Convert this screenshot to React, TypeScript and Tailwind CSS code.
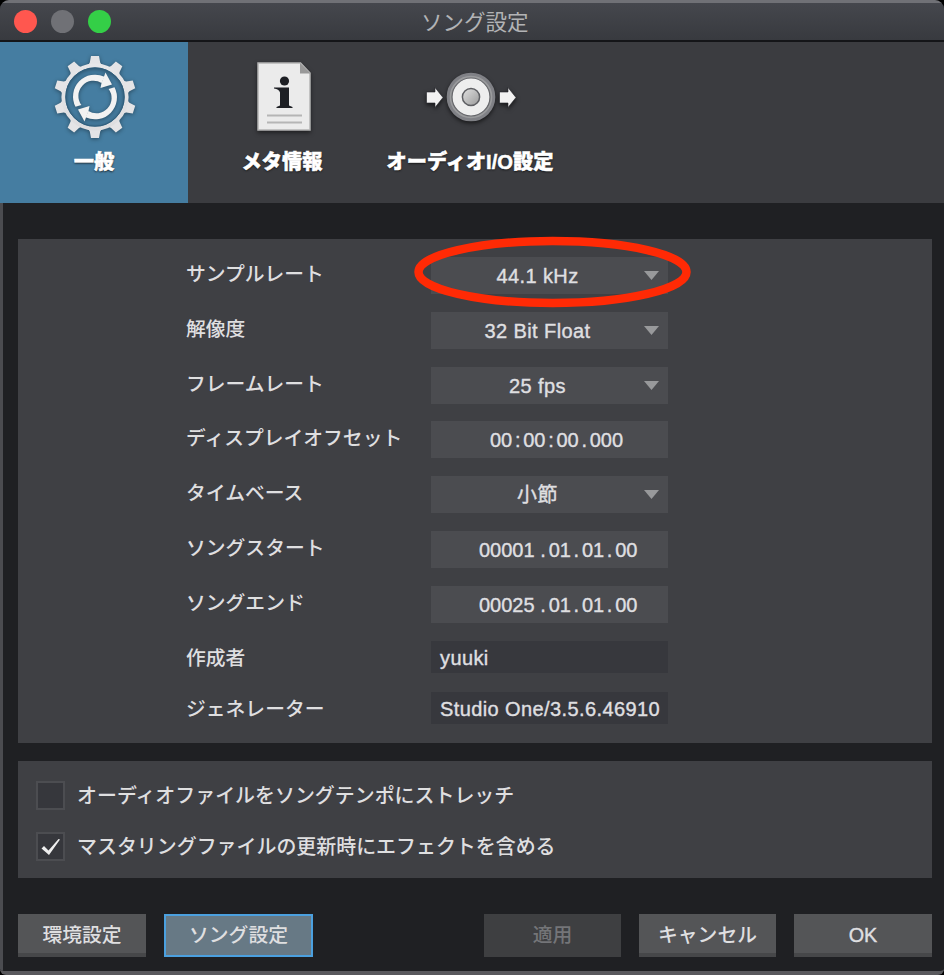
import type { ReactNode } from "react";
import clsx from "clsx";

const TEETH = [0, 36, 72, 108, 144, 180, 216, 252, 288, 324];

function GearIcon() {
  return (
    <svg width="88" height="88" viewBox="-44 -44 88 88" className="relative left-[0.5px] drop-shadow-[0_1px_2px_rgba(0,0,0,0.4)]">
      <defs>
        <linearGradient id="gear" x1="0" y1="-41" x2="0" y2="41" gradientUnits="userSpaceOnUse">
          <stop offset="0" stopColor="#e8e8ea" />
          <stop offset="1" stopColor="#dcdcde" />
        </linearGradient>
      </defs>
      {TEETH.map((angle) => (
        <path key={angle} d="M-7-31.5-5.2-34.5-4-41H4L5.2-34.5 7-31.5Z" fill="#e4e4e6" transform={`rotate(${angle})`} />
      ))}
      <circle r="31.6" fill="none" stroke="url(#gear)" strokeWidth="4" />
      <circle r="29.2" fill="none" stroke="#2f5f7e" strokeWidth="1" />
      {[0, 180].map((angle) => (
        <g key={angle} fill="#f2f2f2" transform={`rotate(${angle})`}>
          <path d="M-19.5 9.8-13.6 8A15.2 15.2 0 0 1 6.6-14L9.5-20.2A22 22 0 0 0-19.5 9.8Z" />
          <path d="M10.5-24.5 17-12.5 5.5-9 6.5-14 9-20.5Z" />
        </g>
      ))}
    </svg>
  );
}

function MetaIcon() {
  return (
    <svg width="60" height="76" viewBox="0 0 60 76" className="relative left-[2px] drop-shadow-[0_2px_2px_rgba(0,0,0,0.5)]">
      <path d="M4 4H46.5L56 14V71H4Z" fill="#ebebeb" stroke="#b5b5b5" strokeWidth="1.5" />
      <path d="M46 4V14.5H56.5Z" fill="#999" />
      <circle cx="30.5" cy="22" r="4.6" fill="#1d1f24" />
      <path d="M20 28.5H35V46.5L38.5 48V49H22.5V48L26 46.5V33.5Q25 30 20 29.5Z" fill="#1d1f24" />
      <path d="M13 56.5H48M13 63.5H48" stroke="#b5b5b5" strokeWidth="2" />
    </svg>
  );
}

function AudioIcon() {
  return (
    <svg width="100" height="60" viewBox="-50 -30 100 60" className="relative left-px drop-shadow-[0_2px_2px_rgba(0,0,0,0.6)]">
      <defs>
        <linearGradient id="knob" x1="0" y1="0" x2="1" y2="1">
          <stop offset="0" stopColor="#e2e2e2" />
          <stop offset="1" stopColor="#999" />
        </linearGradient>
      </defs>
      <circle r="22.8" fill="#9a9b9d" stroke="#808186" strokeWidth="3" />
      <circle r="19" fill="#eee" stroke="#66676b" strokeWidth="1.2" />
      <circle r="8.6" fill="url(#knob)" stroke="#5e5f63" strokeWidth="1.5" />
      <path d="M-44.5-5H-36V-9.5L-28 .5-36 10.5V6H-44.5Z" fill="#f2f2f2" stroke="#222428" strokeWidth="0.6" />
      <path d="M28.5-5H37V-9.5L45 .5 37 10.5V6H28.5Z" fill="#f2f2f2" stroke="#222428" strokeWidth="0.6" />
    </svg>
  );
}

function Tab({ label, icon, active, className }: { label: string; icon: ReactNode; active?: boolean; className: string }) {
  return (
    <button className={clsx("flex h-full flex-col items-center", active && "bg-[#457da1]", className)}>
      <span className="flex h-[109px] items-center justify-center">{icon}</span>
      <span className="text-[20.2px] leading-[22px] font-black whitespace-nowrap text-white [-webkit-text-stroke:0.5px_white] [text-shadow:0_1px_2px_#111]">
        {label}
      </span>
    </button>
  );
}

function Row({ label, children, className }: { label: string; children: ReactNode; className?: string }) {
  return (
    <div className={clsx("flex items-start pl-[168px]", className ?? "h-[54.8px]")}>
      <div className="w-[245px] pt-[3px] text-[19.8px] leading-7 font-medium">{label}</div>
      {children}
    </div>
  );
}

const LATIN = "tracking-[0.4px] [-webkit-text-stroke:0.4px_currentColor]";

function Select({ value }: { value: string }) {
  return (
    <button className="flex h-[37px] w-[237px] items-center bg-[#4b4c50] pr-[9px]">
      <span className={clsx("flex-1 pt-px text-center", LATIN)}>{value}</span>
      <svg width="15" height="9" viewBox="0 0 15 9">
        <path d="M0 0H15L7.5 9Z" fill="#98999b" />
      </svg>
    </button>
  );
}

// Separators are wider than the glyph, so every group keeps its column
function Counter({ value, className }: { value: string; className: string }) {
  return (
    <div className={clsx("flex h-[37px] w-[237px] items-center bg-[#4b4c50] pt-px [-webkit-text-stroke:0.4px_currentColor]", className)}>
      {value.split(/([.:])/).map((part, i) => (
        <span key={i} className={clsx(/[.:]/.test(part) && "w-[11px] text-center", i === 0 && part.length > 2 && "mr-[3px]")}>
          {part}
        </span>
      ))}
    </div>
  );
}

function TextField({ value }: { value: string }) {
  return <div className={clsx("h-8 w-[237px] bg-[#37383d] pl-[9px] leading-[34px] whitespace-nowrap", LATIN)}>{value}</div>;
}

function CheckRow({ label, checked }: { label: string; checked?: boolean }) {
  return (
    <label className="flex h-[29px] items-center">
      <span className="mr-3 flex size-[29px] items-center justify-center border-2 border-[#4c4d51] bg-[#36373c]">
        {checked && (
          <svg width="22" height="22" viewBox="0 0 22 22">
            <path d="M1.5 12.5 4 10 8.5 14.5 18.5 3 20 3.5 9 19Z" fill="#eee" />
          </svg>
        )}
      </span>
      <span className="pt-[2px] font-medium">{label}</span>
    </label>
  );
}

function Button({ label, className }: { label: string; className: string }) {
  return (
    <button className={clsx("flex h-[43px] items-center justify-center text-[19.8px] font-medium", className)}>
      {label}
    </button>
  );
}

const PLAIN = "bg-[#545557] shadow-[inset_0_-4px_0_#464749]";

export default function App() {
  return (
    <div className="h-[975px] w-[944px] overflow-hidden bg-black font-['Liberation_Sans','Noto_Sans_CJK_JP',sans-serif] text-[20px] text-[#dfdfe0]">
      <div className="flex h-full flex-col overflow-hidden rounded-t-[9px] rounded-b-[6px] border-b-4 border-[#59595d] bg-[#1f2023]">
        <header className="relative flex h-[42px] shrink-0 items-center border-t-[3px] border-b-2 border-t-[#707176] border-b-[#141518] bg-linear-to-b from-[#45474d] to-[#383a3f] pl-[14px]">
          <div className="flex gap-[14px]">
            <i className="size-[23px] rounded-full bg-[#ff574f]" />
            <i className="size-[23px] rounded-full bg-[#707176]" />
            <i className="size-[23px] rounded-full bg-[#34cf47]" />
          </div>
          <h1 className="absolute top-[4px] left-[421px] text-[21.5px] leading-8 text-[#b2b3b5]">ソング設定</h1>
        </header>

        <nav className="flex h-[161px] shrink-0 bg-[#3b3c40]">
          <Tab label="一般" icon={<GearIcon />} active className="w-[188px]" />
          <Tab label="メタ情報" icon={<MetaIcon />} className="w-[188px]" />
          <Tab label="オーディオI/O設定" icon={<AudioIcon />} className="w-[188px]" />
        </nav>

        <main className="flex flex-1 flex-col border-l-[3px] border-[#4b4c50] pl-[15px]">
          <section className="relative mt-9 h-[504px] w-[914px] bg-[#3f4044] pt-[18px]">
            <Row label="サンプルレート"><Select value="44.1 kHz" /></Row>
            <Row label="解像度"><Select value="32 Bit Float" /></Row>
            <Row label="フレームレート"><Select value="25 fps" /></Row>
            <Row label="ディスプレイオフセット"><Counter value="00:00:00.000" className="pl-[59px]" /></Row>
            <Row label="タイムベース"><Select value="小節" /></Row>
            <Row label="ソングスタート"><Counter value="00001.01.01.00" className="pl-12" /></Row>
            <Row label="ソングエンド"><Counter value="00025.01.01.00" className="pl-12" /></Row>
            <Row label="作成者" className="h-[51px]"><TextField value="yuuki" /></Row>
            <Row label="ジェネレーター" className="h-8"><TextField value="Studio One/3.5.6.46910" /></Row>
            <svg className="absolute top-[-4px] left-[394px]" width="281" height="74" viewBox="0 0 281 74">
              <ellipse cx="140.5" cy="37" rx="134" ry="31" fill="none" stroke="#ff2a05" strokeWidth="8.5" />
            </svg>
          </section>

          <section className="mt-[18px] flex h-[117px] w-[914px] flex-col gap-[22px] bg-[#3f4044] pt-5 pl-[18px] text-[19.95px]">
            <CheckRow label="オーディオファイルをソングテンポにストレッチ" />
            <CheckRow label="マスタリングファイルの更新時にエフェクトを含める" checked />
          </section>

          <footer className="mt-9 flex w-[914px]">
            <Button label="環境設定" className={clsx("w-[128px]", PLAIN)} />
            <Button label="ソング設定" className="ml-[18px] w-[149px] border-2 border-[#4ba0df] bg-[#677985]" />
            <Button label="適用" className="ml-auto w-[137px] bg-[#3e3f41] text-[#747578]" />
            <Button label="キャンセル" className={clsx("ml-[18px] w-[137px]", PLAIN)} />
            <Button label="OK" className={clsx("ml-[18px] w-[138px] [-webkit-text-stroke:0.4px_currentColor]", PLAIN)} />
          </footer>
        </main>
      </div>
    </div>
  );
}
